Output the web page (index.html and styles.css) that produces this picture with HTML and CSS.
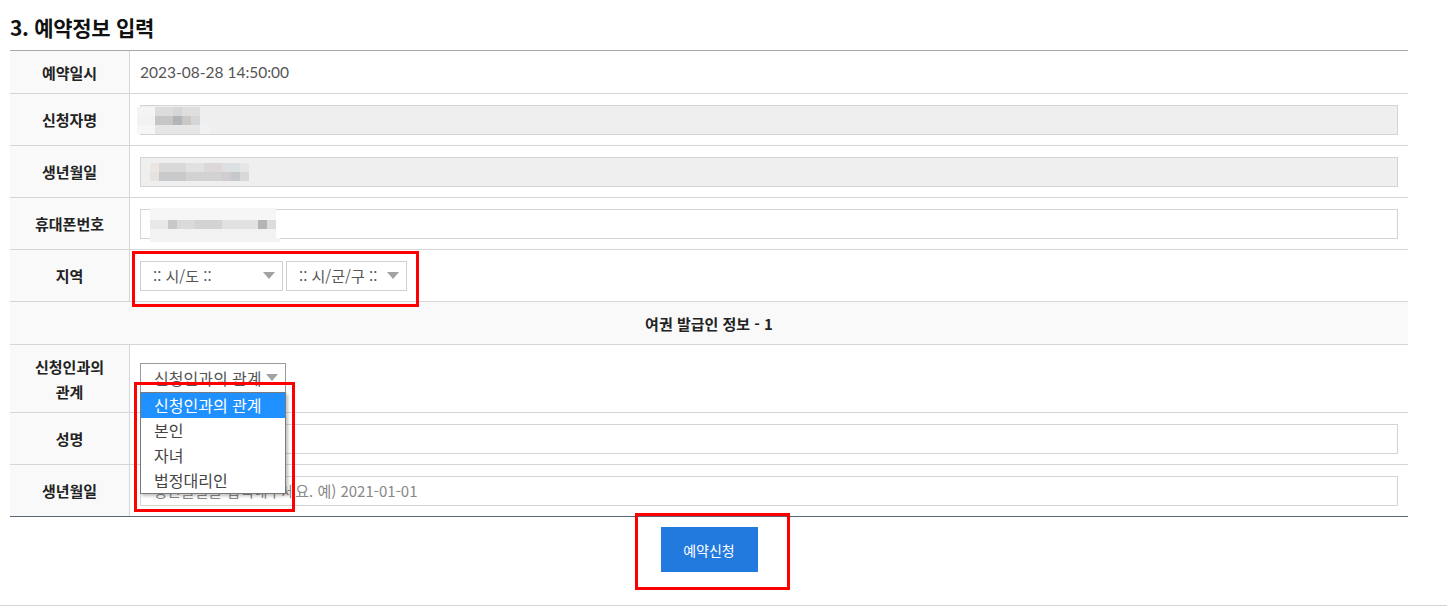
FILE: index.html
```html
<!DOCTYPE html>
<html lang="ko">
<head>
<meta charset="utf-8">
<title>예약정보 입력</title>
<link rel="stylesheet" href="styles.css">
</head>
<body>
<div class="wrap">
  <div class="page">
    <h3 class="title">3. 예약정보 입력</h3>
    <div class="form">
      <div class="row h43">
        <div class="th">예약일시</div>
        <div class="td"><span class="val">2023-08-28 14:50:00</span></div>
      </div>
      <div class="row h52">
        <div class="th">신청자명</div>
        <div class="td"><div class="field readonly"><span class="blur blur-name"></span></div></div>
      </div>
      <div class="row h52">
        <div class="th">생년월일</div>
        <div class="td"><div class="field readonly"><span class="blur blur-birth"></span></div></div>
      </div>
      <div class="row h52">
        <div class="th">휴대폰번호</div>
        <div class="td"><div class="field"><span class="blur blur-phone"></span></div></div>
      </div>
      <div class="row h52">
        <div class="th">지역</div>
        <div class="td selects">
          <div class="select w143"><span>:: 시/도 ::</span><i class="arrow"></i></div>
          <div class="select w121"><span>:: 시/군/구 ::</span><i class="arrow"></i></div>
        </div>
      </div>
      <div class="row h43 head">여권 발급인 정보 - 1</div>
      <div class="row h68">
        <div class="th two">신청인과의<br>관계</div>
        <div class="td">
          <div class="select-wrap">
            <div class="select rel w146"><span>신청인과의 관계</span><i class="arrow"></i></div>
            <ul class="options">
              <li class="on">신청인과의 관계</li>
              <li>본인</li>
              <li>자녀</li>
              <li>법정대리인</li>
            </ul>
          </div>
        </div>
      </div>
      <div class="row h52">
        <div class="th">성명</div>
        <div class="td"><input class="field" type="text"></div>
      </div>
      <div class="row h52 last">
        <div class="th">생년월일</div>
        <div class="td"><input class="field" type="text" placeholder="생년월일을 입력해주세요. 예) 2021-01-01"></div>
      </div>
    </div>
    <div class="btn-area"><button class="btn" type="button">예약신청</button></div>
  </div>
  <div class="bottom-line"></div>
  <div class="mark mark-region"></div>
  <div class="mark mark-list"></div>
  <div class="mark mark-btn"></div>
</div>
</body>
</html>
```
FILE: styles.css
```css
html, body {
  margin: 0;
  padding: 0;
  background: #fff;
}
body {
  font-family: Lato, "Noto Sans CJK KR", sans-serif;
  color: #222;
}
.wrap {
  position: relative;
  width: 1447px;
}
.page {
  padding-left: 10px;
}
.title {
  margin: 0;
  height: 50px;
  box-sizing: border-box;
  padding-top: 13px;
  line-height: 28px;
  font-size: 21px;
  font-weight: 700;
  color: #111;
  font-family: "Noto Sans CJK KR", sans-serif;
  letter-spacing: -0.3px;
}
.form {
  width: 1398px;
  border-top: 1px solid #a8a8a8;
}
.row {
  display: flex;
  box-sizing: border-box;
  border-bottom: 1px solid #d6d6d6;
}
.row.last {
  border-bottom-color: #5b6378;
}
.h43 { height: 43px; }
.h52 { height: 52px; }
.h68 { height: 68px; }
.th {
  width: 120px;
  flex: none;
  box-sizing: border-box;
  border-right: 1px solid #d6d6d6;
  background: #f9f9f9;
  display: flex;
  align-items: center;
  justify-content: center;
  text-align: center;
  font-family: "Noto Sans CJK KR", sans-serif;
  font-weight: 700;
  font-size: 15px;
  color: #222;
}
.th.two {
  line-height: 25px;
}
.td {
  flex: 1;
  display: flex;
  align-items: center;
  padding: 0 10px;
  min-width: 0;
}
.val {
  font-family: Lato, sans-serif;
  font-size: 15.5px;
  color: #555;
}
.head {
  background: #f9f9f9;
  justify-content: center;
  align-items: center;
  font-family: "Noto Sans CJK KR", sans-serif;
  font-weight: 700;
  font-size: 15px;
  color: #222;
}
.field {
  display: flex;
  align-items: center;
  width: 100%;
  height: 30px;
  box-sizing: border-box;
  border: 1px solid #d4d4d4;
  background: #fff;
  padding: 0 12px;
  margin: 0;
  font-family: "Noto Sans CJK KR", sans-serif;
  font-size: 15px;
  color: #555;
  outline: none;
}
.field::placeholder {
  color: #888;
}
.field.readonly {
  background: #efefef;
}
.blur {
  display: block;
  flex: none;
}
.blur-name {
  width: 72px;
  height: 27px;
  margin-left: -16px;
  margin-top: 2px;
  background:
    linear-gradient(90deg, #f4f4f4 0 18px, #dcdcdc 18px 36px, #d6d6d6 36px 45px, #dedede 45px 63px, #efefef 63px) 0 0 / 100% 9px no-repeat,
    linear-gradient(90deg, #f2f2f2 0 18px, #c6c6c6 18px 36px, #b2b5b8 36px 45px, #cbc7c4 45px 54px, #d4d7da 54px 63px, #efefef 63px) 0 9px / 100% 9px no-repeat,
    linear-gradient(90deg, #f6f6f6 0 18px, #e6e6e6 18px 63px, #f2f2f2 63px) 0 18px / 100% 9px no-repeat;
}
.blur-birth {
  width: 99px;
  height: 18px;
  margin-left: -3px;
  background:
    linear-gradient(90deg, #ece6e3 0 9px, #d9d9da 9px 36px, #e1e1e1 36px 54px, #dcd8d8 54px 72px, #dde0e2 72px 90px, #e6e6e6 90px) 0 0 / 100% 9px no-repeat,
    linear-gradient(90deg, #e6e2df 0 9px, #c8c9cb 9px 36px, #d2d2d3 36px 72px, #cfcdd0 72px 81px, #c6c9cc 81px 90px, #d8d8d8 90px) 0 9px / 100% 9px no-repeat;
}
.blur-phone {
  width: 130px;
  height: 35px;
  margin-left: -3px;
  margin-top: 4px;
  background:
    linear-gradient(90deg, #f6f6f6 0 126px, transparent 126px) 0 0 / 100% 12px no-repeat,
    linear-gradient(90deg, #e8e8e8 0 18px, #c8c8ca 18px 27px, #dadada 27px 45px, #d3d3d3 45px 72px, #e1e1e1 72px 108px, #b4b4b4 108px 117px, #dcdcdc 117px 126px, transparent 126px) 0 12px / 100% 9px no-repeat,
    linear-gradient(90deg, #f2f2f2 0 126px, transparent 126px) 0 21px / 100% 9px no-repeat,
    linear-gradient(90deg, #f3f3f3 0 144px) 0 30px / 100% 4px no-repeat;
}
.selects {
  gap: 3px;
}
.select {
  display: flex;
  align-items: center;
  height: 30px;
  box-sizing: border-box;
  border: 1px solid #cfcfcf;
  background: #fff;
  padding: 0 7px 0 12px;
  font-family: "Noto Sans CJK KR", sans-serif;
  font-size: 15px;
  color: #555;
  white-space: nowrap;
}
.select span {
  flex: 1;
}
.w143 { width: 143px; }
.w121 { width: 121px; padding-left: 12px; }
.w146 { width: 146px; }
.select.rel {
  border-color: #9a9a9a;
  font-size: 16px;
  padding-left: 13px;
  overflow: hidden;
}
.arrow {
  width: 0;
  height: 0;
  border-left: 6px solid transparent;
  border-right: 6px solid transparent;
  border-top: 7px solid #a2a2a2;
  flex: none;
}
.select-wrap {
  position: relative;
  margin-top: -2px;
}
.options {
  position: absolute;
  left: 0;
  top: 29px;
  width: 146px;
  margin: 0;
  padding: 0;
  list-style: none;
  box-sizing: border-box;
  border: 1px solid #7a7a7a;
  background: #fff;
  box-shadow: 2px 2px 3px rgba(0, 0, 0, 0.25);
  z-index: 2;
}
.options li {
  height: 25px;
  line-height: 25px;
  padding-left: 13px;
  font-family: "Noto Sans CJK KR", sans-serif;
  font-size: 16px;
  color: #444;
  white-space: nowrap;
}
.options li.on {
  background: #1e90ff;
  color: #fff;
}
.btn-area {
  width: 1398px;
  display: flex;
  justify-content: center;
  padding-top: 10px;
}
.btn {
  width: 97px;
  height: 45px;
  border: none;
  margin: 0;
  padding: 0;
  background: #237ade;
  color: #fff;
  font-family: "Noto Sans CJK KR", sans-serif;
  font-size: 14px;
}
.bottom-line {
  margin-top: 33px;
  height: 1px;
  background: #d4d4d4;
}
.mark {
  position: absolute;
  box-sizing: border-box;
  border: 3px solid #ff0000;
  z-index: 3;
}
.mark-region {
  left: 132px;
  top: 251px;
  width: 287px;
  height: 56px;
}
.mark-list {
  left: 134px;
  top: 382px;
  width: 161px;
  height: 130px;
}
.mark-btn {
  left: 635px;
  top: 513px;
  width: 155px;
  height: 77px;
}
```
